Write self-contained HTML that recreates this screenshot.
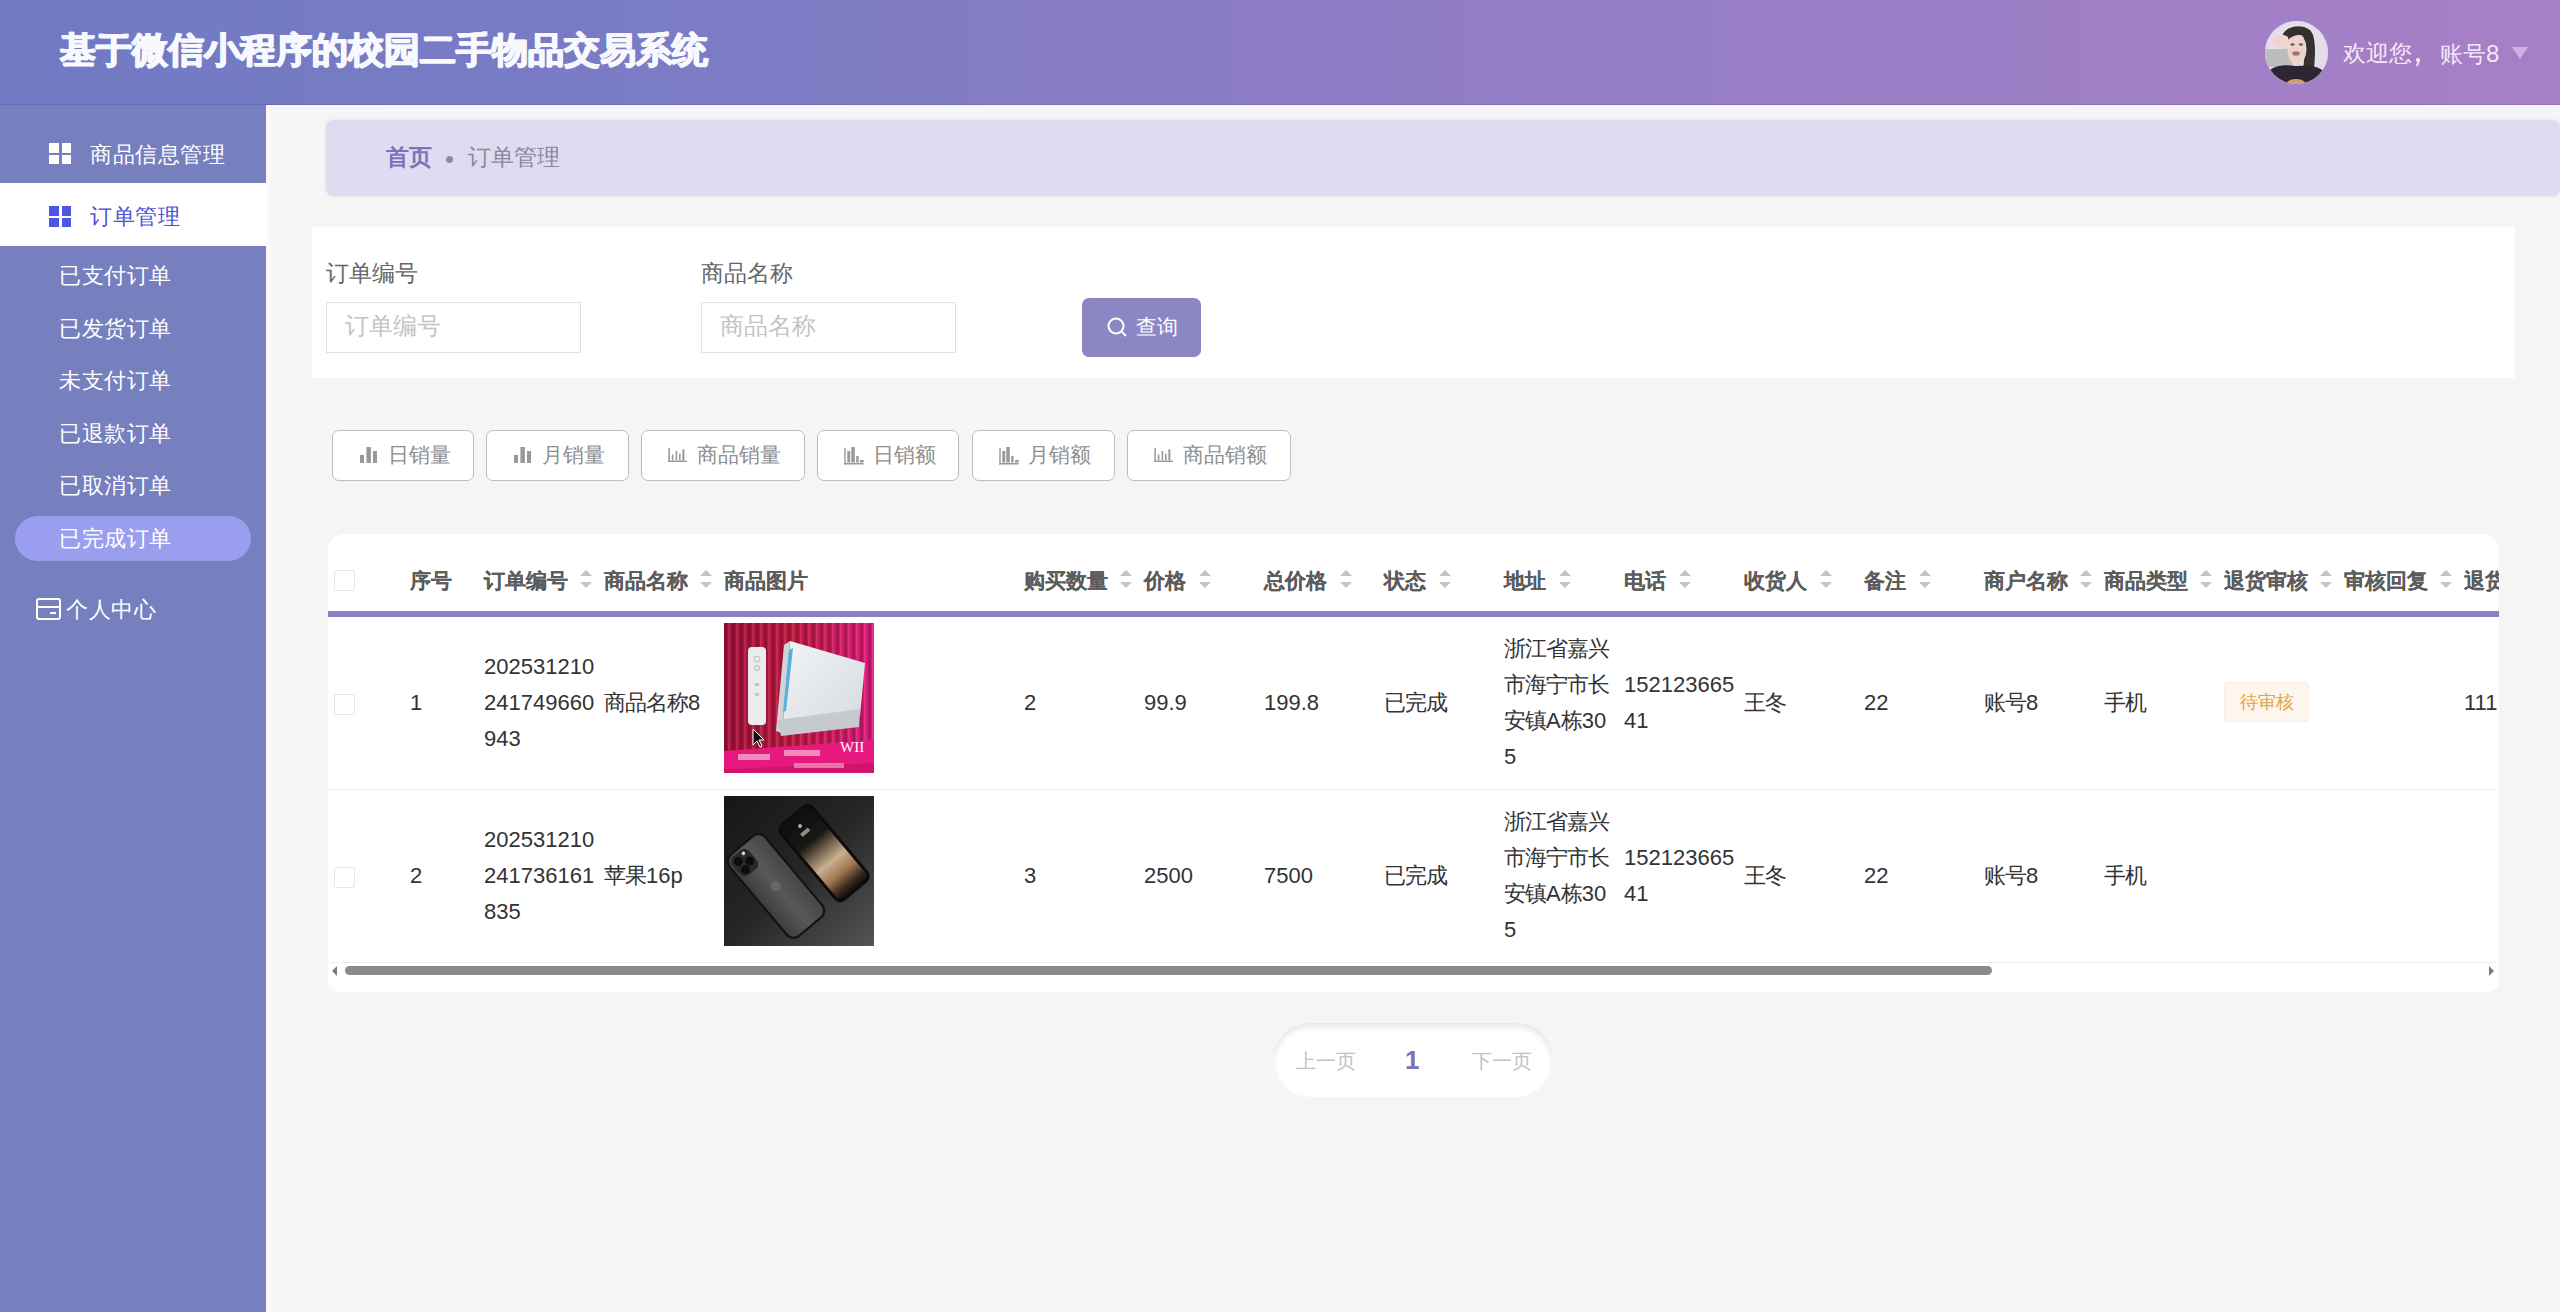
<!DOCTYPE html>
<html><head><meta charset="utf-8">
<style>
*{box-sizing:border-box;margin:0;padding:0}
html,body{width:2560px;height:1312px;overflow:hidden}
body{position:relative;background:#f5f5f5;font-family:"Liberation Sans",sans-serif;color:#333}
.abs{position:absolute;white-space:nowrap}
#hdr{position:absolute;z-index:2;left:0;top:0;width:2560px;height:105px;box-shadow:inset 0 -1px 0 rgba(0,0,0,.10);background:linear-gradient(90deg,#6f7ac3 0%,#7a7cc4 25%,#8a7cc4 47%,#9a7fc6 72%,#a07fc6 85%,#a87fc6 100%)}
#title{left:60px;top:26px;font-size:36px;line-height:48px;font-weight:bold;color:#f8f8ff;letter-spacing:0;text-shadow:0.7px 0 0 #f8f8ff,-0.7px 0 0 #f8f8ff,0 0.5px 0 #f8f8ff}
#side{position:absolute;left:0;top:104px;width:266px;height:1208px;background:#7680be}
.mi{color:#fff;font-size:22px;line-height:30px;letter-spacing:0.6px}
.grid{position:absolute;width:22px;height:21px}
.grid i{position:absolute;width:9.5px;height:9.5px;background:#fff}
#bc{position:absolute;left:326px;top:120px;width:2234px;height:76px;background:#dfdcf1;border-radius:8px;box-shadow:0 0 3px rgba(120,110,160,.18)}
#sp{position:absolute;left:312px;top:227px;width:2203px;height:151px;background:#fff}
.lbl{font-size:22.5px;line-height:30px;color:#666}
.inp{position:absolute;width:255px;height:51px;border:1px solid #e2e2e2;background:#fff}
.ph{font-size:23.5px;line-height:30px;color:#c4c4c4}
#qbtn{position:absolute;left:1082px;top:298px;width:119px;height:59px;background:#8b86c4;border-radius:7px}
.sb{position:absolute;top:430px;height:51px;border:1px solid #bdbdbd;border-radius:7px;background:#fff}
.sbt{font-size:20.5px;line-height:26px;color:#8e8e8e}
#card{position:absolute;left:328px;top:534px;width:2171px;height:458px;background:#fff;border-radius:16px 16px 10px 10px;overflow:hidden}
.th{font-size:20.5px;line-height:26px;font-weight:bold;color:#5c5c5c;text-shadow:0.4px 0 0 #5c5c5c}
.td{font-size:22px;line-height:36px;color:#333}
.c{letter-spacing:-1px}
.sort{position:absolute;width:12px;height:18px}
.sort:before{content:"";position:absolute;left:0;top:0;border-left:6px solid transparent;border-right:6px solid transparent;border-bottom:6px solid #c4c4c4}
.sort:after{content:"";position:absolute;left:0;top:12px;border-left:6px solid transparent;border-right:6px solid transparent;border-top:6px solid #c4c4c4}
.cb{position:absolute;width:21px;height:21px;border:1px solid #e6e6e6;border-radius:2px;background:#fff}
</style></head><body>

<div id="hdr">
  <div id="title" class="abs">基于微信小程序的校园二手物品交易系统</div>

  <div class="abs" style="left:2265px;top:21px;width:63px;height:63px;border-radius:50%;overflow:hidden;background:#d9d6dc">
    <svg width="63" height="63" viewBox="0 0 63 63">
      <defs><radialGradient id="avbg" cx="0.5" cy="0.45" r="0.6"><stop offset="0" stop-color="#ecebef"/><stop offset="1" stop-color="#e0d6ea"/></radialGradient>
      <filter id="avb" x="-10%" y="-10%" width="120%" height="120%"><feGaussianBlur stdDeviation="0.7"/></filter></defs>
      <rect width="63" height="63" fill="url(#avbg)"/>
      <g filter="url(#avb)">
      <path d="M17 17 C18 3 44 1 48 14 C51 24 50 36 49 48 L38 48 C40 36 40 22 36 16 C30 12 24 14 22 22Z" fill="#35302f"/>
      <path d="M0 28 L26 28 L28 46 L0 46Z" fill="#bdbdbf"/>
      <ellipse cx="32" cy="28" rx="9.5" ry="16" fill="#ecd3cc"/>
      <path d="M21 15 C26 9 36 9 40 15 C34 13 27 14 22 20Z" fill="#35302f"/>
      <path d="M6 20 C9 13 18 12 23 16 L25 28 C16 28 9 26 6 20Z" fill="#eed5cd"/>
      <ellipse cx="27.5" cy="23.5" rx="2" ry="1.2" fill="#6a5550"/>
      <ellipse cx="36" cy="23.5" rx="2" ry="1.2" fill="#6a5550"/>
      <ellipse cx="31" cy="32.5" rx="3.8" ry="2.2" fill="#a47276"/>
      <path d="M4 50 C9 45 18 43 31 45 C44 44 54 45 58 50 L63 63 L0 63 Z" fill="#2c2830"/>
      <ellipse cx="31" cy="62" rx="9" ry="4" fill="#c9a070"/>
      </g>
    </svg>
  </div>
  <div class="abs" style="left:2343px;top:39px;font-size:22.5px;line-height:30px;color:#f6e8f8">欢迎您</div>
  <div class="abs" style="left:2416px;top:58px;width:4px;height:4px;border-radius:50%;background:#f6e8f8"></div>
  <div class="abs" style="left:2417px;top:60px;width:2px;height:6px;transform:skewX(-20deg);background:#f6e8f8"></div>
  <div class="abs" style="left:2440px;top:39px;font-size:22.5px;line-height:30px;color:#f6e8f8">账号<span style="font-size:24px">8</span></div>
  <div class="abs" style="left:2512px;top:47px;width:0;height:0;border-left:8px solid transparent;border-right:8px solid transparent;border-top:12px solid #d0b3e6"></div>
</div>

<div id="side">
  <div class="grid" style="left:49px;top:39px"><i style="left:0;top:0"></i><i style="left:12.5px;top:0"></i><i style="left:0;top:11.5px"></i><i style="left:12.5px;top:11.5px"></i></div>
  <div class="abs mi" style="left:90px;top:36px">商品信息管理</div>
  <div style="position:absolute;left:0;top:79px;width:266px;height:63px;background:#fff"></div>
  <div class="grid" style="left:49px;top:102px"><i style="left:0;top:0;background:#4d55e6"></i><i style="left:12.5px;top:0;background:#4d55e6"></i><i style="left:0;top:11.5px;background:#4d55e6"></i><i style="left:12.5px;top:11.5px;background:#4d55e6"></i></div>
  <div class="abs mi" style="left:90px;top:98px;color:#4c50d8">订单管理</div>
  <div class="abs mi" style="left:59px;top:157px">已支付订单</div>
  <div class="abs mi" style="left:59px;top:210px">已发货订单</div>
  <div class="abs mi" style="left:59px;top:262px">未支付订单</div>
  <div class="abs mi" style="left:59px;top:315px">已退款订单</div>
  <div class="abs mi" style="left:59px;top:367px">已取消订单</div>
  <div style="position:absolute;left:15px;top:412px;width:236px;height:45px;border-radius:23px;background:#9a9eee"></div>
  <div class="abs mi" style="left:59px;top:420px">已完成订单</div>
  <div class="abs" style="left:36px;top:494px;width:25px;height:22px;border:2px solid #fff;border-radius:3px"><i style="position:absolute;left:0;right:0;top:6px;height:2px;background:#fff"></i><i style="position:absolute;right:3px;top:12px;width:6px;height:2px;background:#fff"></i></div>
  <div class="abs mi" style="left:66px;top:491px">个人中心</div>
</div>

<div class="abs" style="left:266px;top:105px;width:4px;height:1207px;background:#fbf9fb"></div>
<div class="abs" style="left:270px;top:105px;width:2290px;height:15px;background:linear-gradient(#f7f5fa,#f4f4f8)"></div>
<div id="bc">
  <div class="abs" style="left:60px;top:23px;font-size:22.5px;line-height:30px;font-weight:bold;color:#7b74b8">首页</div>
  <div class="abs" style="left:120px;top:36px;width:7px;height:7px;border-radius:50%;background:#8c8a9c"></div>
  <div class="abs" style="left:142px;top:23px;font-size:22.5px;line-height:30px;color:#8b899c">订单管理</div>
</div>
<div id="sp">
  <div class="abs lbl" style="left:14px;top:32px">订单编号</div>
  <div class="inp" style="left:14px;top:75px"></div>
  <div class="abs ph" style="left:33px;top:84px">订单编号</div>
  <div class="abs lbl" style="left:389px;top:32px">商品名称</div>
  <div class="inp" style="left:389px;top:75px"></div>
  <div class="abs ph" style="left:408px;top:84px">商品名称</div>
</div>
<div id="qbtn">
  <svg class="abs" style="left:25px;top:19px" width="21" height="20" viewBox="0 0 21 20"><circle cx="9" cy="9" r="7.5" fill="none" stroke="#fff" stroke-width="2"/><path d="M14.5 14.5 L19 19" stroke="#fff" stroke-width="2"/></svg>
  <div class="abs" style="left:54px;top:15px;font-size:21px;line-height:28px;color:#fff">查询</div>
</div>
<div class="sb" style="left:332px;width:142px"><svg class="abs" style="left:27px;top:16px" width="18" height="16" viewBox="0 0 18 16"><rect x="0" y="8" width="4" height="8" fill="#999"/><rect x="6.4" y="0" width="4.5" height="16" fill="#999"/><rect x="13" y="4" width="4" height="12" fill="#999"/></svg><div class="abs sbt" style="left:55px;top:11px">日销量</div></div>
<div class="sb" style="left:486px;width:143px"><svg class="abs" style="left:27px;top:16px" width="18" height="16" viewBox="0 0 18 16"><rect x="0" y="8" width="4" height="8" fill="#999"/><rect x="6.4" y="0" width="4.5" height="16" fill="#999"/><rect x="13" y="4" width="4" height="12" fill="#999"/></svg><div class="abs sbt" style="left:55px;top:11px">月销量</div></div>
<div class="sb" style="left:641px;width:164px"><svg class="abs" style="left:26px;top:17px" width="20" height="15" viewBox="0 0 20 15"><rect x="0.4" y="0" width="1.5" height="14" fill="#999"/><rect x="0" y="12.6" width="19" height="1.4" fill="#999"/><rect x="3.8" y="6.4" width="1.6" height="6.2" fill="#999"/><rect x="7.6" y="3" width="1.6" height="9.6" fill="#999"/><rect x="11" y="5.7" width="1.6" height="6.9" fill="#999"/><rect x="14.4" y="1.4" width="2" height="11.2" fill="#999"/></svg><div class="abs sbt" style="left:55px;top:11px">商品销量</div></div>
<div class="sb" style="left:817px;width:142px"><svg class="abs" style="left:26px;top:16px" width="20" height="18" viewBox="0 0 20 18"><rect x="0.3" y="1" width="1.4" height="16.7" fill="#999"/><rect x="0" y="16" width="19.5" height="1.5" fill="#999"/><rect x="3.3" y="4" width="2.9" height="11.5" fill="#999"/><rect x="7.3" y="0" width="3.5" height="15.5" fill="#999"/><rect x="12.2" y="9" width="2.4" height="6.5" fill="#999"/><rect x="16" y="13" width="3.7" height="2.5" fill="#999"/></svg><div class="abs sbt" style="left:55px;top:11px">日销额</div></div>
<div class="sb" style="left:972px;width:143px"><svg class="abs" style="left:26px;top:16px" width="20" height="18" viewBox="0 0 20 18"><rect x="0.3" y="1" width="1.4" height="16.7" fill="#999"/><rect x="0" y="16" width="19.5" height="1.5" fill="#999"/><rect x="3.3" y="4" width="2.9" height="11.5" fill="#999"/><rect x="7.3" y="0" width="3.5" height="15.5" fill="#999"/><rect x="12.2" y="9" width="2.4" height="6.5" fill="#999"/><rect x="16" y="13" width="3.7" height="2.5" fill="#999"/></svg><div class="abs sbt" style="left:55px;top:11px">月销额</div></div>
<div class="sb" style="left:1127px;width:164px"><svg class="abs" style="left:26px;top:17px" width="20" height="15" viewBox="0 0 20 15"><rect x="0.4" y="0" width="1.5" height="14" fill="#999"/><rect x="0" y="12.6" width="19" height="1.4" fill="#999"/><rect x="3.8" y="6.4" width="1.6" height="6.2" fill="#999"/><rect x="7.6" y="3" width="1.6" height="9.6" fill="#999"/><rect x="11" y="5.7" width="1.6" height="6.9" fill="#999"/><rect x="14.4" y="1.4" width="2" height="11.2" fill="#999"/></svg><div class="abs sbt" style="left:55px;top:11px">商品销额</div></div>
<div id="card">
<div class="cb" style="left:6px;top:36px"></div>
<div class="abs th" style="left:82px;top:34px">序号</div>
<div class="abs th" style="left:156px;top:34px">订单编号</div>
<div class="sort" style="left:252px;top:36px"></div>
<div class="abs th" style="left:276px;top:34px">商品名称</div>
<div class="sort" style="left:372px;top:36px"></div>
<div class="abs th" style="left:396px;top:34px">商品图片</div>
<div class="abs th" style="left:696px;top:34px">购买数量</div>
<div class="sort" style="left:792px;top:36px"></div>
<div class="abs th" style="left:816px;top:34px">价格</div>
<div class="sort" style="left:871px;top:36px"></div>
<div class="abs th" style="left:936px;top:34px">总价格</div>
<div class="sort" style="left:1012px;top:36px"></div>
<div class="abs th" style="left:1056px;top:34px">状态</div>
<div class="sort" style="left:1111px;top:36px"></div>
<div class="abs th" style="left:1176px;top:34px">地址</div>
<div class="sort" style="left:1231px;top:36px"></div>
<div class="abs th" style="left:1296px;top:34px">电话</div>
<div class="sort" style="left:1351px;top:36px"></div>
<div class="abs th" style="left:1416px;top:34px">收货人</div>
<div class="sort" style="left:1492px;top:36px"></div>
<div class="abs th" style="left:1536px;top:34px">备注</div>
<div class="sort" style="left:1591px;top:36px"></div>
<div class="abs th" style="left:1656px;top:34px">商户名称</div>
<div class="sort" style="left:1752px;top:36px"></div>
<div class="abs th" style="left:1776px;top:34px">商品类型</div>
<div class="sort" style="left:1872px;top:36px"></div>
<div class="abs th" style="left:1896px;top:34px">退货审核</div>
<div class="sort" style="left:1992px;top:36px"></div>
<div class="abs th" style="left:2016px;top:34px">审核回复</div>
<div class="sort" style="left:2112px;top:36px"></div>
<div class="abs th" style="left:2136px;top:34px">退货原因</div>
<div class="sort" style="left:2232px;top:36px"></div>
<div class="abs" style="left:0;top:77px;width:2171px;height:6px;background:#8a80c3"></div>
<div class="cb" style="left:6px;top:160px"></div>
<div class="abs td" style="left:82px;top:151px">1</div>
<div class="abs td" style="left:156px;top:115px">202531210<br>241749660<br>943</div>
<div class="abs td" style="left:276px;top:151px"><span class="c">商品名称</span>8</div>
<div class="abs" style="left:396px;top:89px;width:150px;height:150px"><svg width="150" height="150" viewBox="0 0 150 150">
<defs>
<linearGradient id="cur" x1="0" y1="0" x2="1" y2="0">
<stop offset="0" stop-color="#a50f3a"/><stop offset="0.45" stop-color="#c0163f"/><stop offset="1" stop-color="#dc1a7a"/>
</linearGradient>
<pattern id="str" width="8" height="150" patternUnits="userSpaceOnUse">
<rect x="0" width="3" height="150" fill="#000" opacity="0.18"/><rect x="4" width="2" height="150" fill="#fff" opacity="0.10"/>
</pattern>
<linearGradient id="body" x1="0" y1="0" x2="1" y2="1">
<stop offset="0" stop-color="#f2f4f6"/><stop offset="1" stop-color="#d6dade"/>
</linearGradient>
</defs>
<rect width="150" height="150" fill="url(#cur)"/>
<rect width="150" height="130" fill="url(#str)"/>
<path d="M0 128 L150 117 L150 150 L0 150Z" fill="#e8197e"/>
<path d="M0 146 L150 140 L150 150 L0 150Z" fill="#d0146a"/>
<rect x="24" y="24" width="18" height="78" rx="4" fill="#e9ebee"/>
<circle cx="33" cy="36" r="3" fill="none" stroke="#b8bcc0" stroke-width="1"/>
<circle cx="33" cy="45" r="2.5" fill="none" stroke="#b8bcc0" stroke-width="1"/>
<rect x="31" y="60" width="4" height="3" fill="#c0c4c8"/><rect x="31" y="70" width="4" height="3" fill="#c0c4c8"/>
<path d="M66 18 L141 40 L136 93 L58 110 Z" fill="url(#body)"/>
<path d="M60 22 L66 18 L58 110 L52 108 Z" fill="#d0d4d8"/>
<path d="M65 27 L69 25 L62 88 L59 89Z" fill="#58b0dc"/>
<path d="M53 97 L136 86 L135 104 L57 113 Z" fill="#c6cacf"/>
<text x="116" y="129" font-family="Liberation Serif,serif" font-size="15" fill="#fff">WII</text>
<rect x="14" y="131" width="32" height="6" fill="#f6b0d0" opacity="0.75"/>
<rect x="60" y="127" width="36" height="6" fill="#f6b0d0" opacity="0.75"/>
<rect x="70" y="140" width="50" height="5" fill="#f6b0d0" opacity="0.6"/>
<path d="M29 106 L29 122 L33 118 L36 124 L38 123 L35 117 L40 117Z" fill="#111" stroke="#fff" stroke-width="1"/>
</svg></div>
<div class="abs td" style="left:696px;top:151px">2</div>
<div class="abs td" style="left:816px;top:151px">99.9</div>
<div class="abs td" style="left:936px;top:151px">199.8</div>
<div class="abs td" style="left:1056px;top:151px"><span class="c">已完成</span></div>
<div class="abs td" style="left:1176px;top:97px"><span class="c">浙江省嘉兴</span><br><span class="c">市海宁市长</span><br><span class="c">安镇</span>A<span class="c">栋</span>30<br>5</div>
<div class="abs td" style="left:1296px;top:133px">152123665<br>41</div>
<div class="abs td" style="left:1416px;top:151px"><span class="c">王冬</span></div>
<div class="abs td" style="left:1536px;top:151px">22</div>
<div class="abs td" style="left:1656px;top:151px"><span class="c">账号</span>8</div>
<div class="abs td" style="left:1776px;top:151px"><span class="c">手机</span></div>
<div class="abs" style="left:1896px;top:148px;width:85px;height:40px;background:#fdf6ec;border:1px solid #faf0e2;border-radius:4px"></div>
<div class="abs" style="left:1912px;top:155px;font-size:18px;line-height:26px;color:#e6a23c">待审核</div>
<div class="abs td" style="left:2136px;top:151px">111</div>
<div class="abs" style="left:0;top:255px;width:2171px;height:1px;background:#ebeef5"></div>
<div class="cb" style="left:6px;top:333px"></div>
<div class="abs td" style="left:82px;top:324px">2</div>
<div class="abs td" style="left:156px;top:288px">202531210<br>241736161<br>835</div>
<div class="abs td" style="left:276px;top:324px"><span class="c">苹果</span>16p</div>
<div class="abs" style="left:396px;top:262px;width:150px;height:150px"><svg width="150" height="150" viewBox="0 0 150 150">
<defs>
<linearGradient id="pbg" x1="0" y1="0" x2="1" y2="1">
<stop offset="0" stop-color="#161616"/><stop offset="0.5" stop-color="#262626"/><stop offset="1" stop-color="#555"/>
</linearGradient>
<linearGradient id="scr" x1="0" y1="0" x2="0" y2="1">
<stop offset="0" stop-color="#0e0e0e"/><stop offset="0.32" stop-color="#1a1816"/><stop offset="0.45" stop-color="#6a5a48"/><stop offset="0.62" stop-color="#c8b090"/><stop offset="0.78" stop-color="#a07850"/><stop offset="0.92" stop-color="#3a2a20"/><stop offset="1" stop-color="#111"/>
</linearGradient>
<linearGradient id="back" x1="0" y1="0" x2="1" y2="0">
<stop offset="0" stop-color="#3e3e3e"/><stop offset="0.5" stop-color="#585858"/><stop offset="1" stop-color="#474747"/>
</linearGradient>
</defs>
<rect width="150" height="150" fill="url(#pbg)"/>
<g transform="translate(52 90) rotate(-40)">
<rect x="-24" y="-54" width="48" height="108" rx="9" fill="#121212"/>
<rect x="-22" y="-52" width="44" height="104" rx="8" fill="url(#back)"/>
<rect x="-20" y="-50" width="22" height="24" rx="6" fill="#2a2a2a"/>
<circle cx="-13" cy="-43" r="4.5" fill="#0c0c0c"/><circle cx="-4" cy="-36" r="4.5" fill="#0c0c0c"/><circle cx="-13" cy="-32" r="4.5" fill="#0c0c0c"/>
<circle cx="-4" cy="-46" r="1.8" fill="#ddd"/>
<circle cx="0" cy="0" r="5" fill="#666"/>
</g>
<g transform="translate(100 57) rotate(-40)">
<rect x="-22" y="-50" width="44" height="100" rx="8" fill="#0c0c0c"/>
<rect x="-19" y="-47" width="38" height="94" rx="6" fill="url(#scr)"/>
<rect x="-6" y="-30" width="10" height="4" fill="#ddd" opacity="0.6"/>
<circle cx="-1" cy="-36" r="2" fill="#eee" opacity="0.7"/>
</g>
</svg></div>
<div class="abs td" style="left:696px;top:324px">3</div>
<div class="abs td" style="left:816px;top:324px">2500</div>
<div class="abs td" style="left:936px;top:324px">7500</div>
<div class="abs td" style="left:1056px;top:324px"><span class="c">已完成</span></div>
<div class="abs td" style="left:1176px;top:270px"><span class="c">浙江省嘉兴</span><br><span class="c">市海宁市长</span><br><span class="c">安镇</span>A<span class="c">栋</span>30<br>5</div>
<div class="abs td" style="left:1296px;top:306px">152123665<br>41</div>
<div class="abs td" style="left:1416px;top:324px"><span class="c">王冬</span></div>
<div class="abs td" style="left:1536px;top:324px">22</div>
<div class="abs td" style="left:1656px;top:324px"><span class="c">账号</span>8</div>
<div class="abs td" style="left:1776px;top:324px"><span class="c">手机</span></div>
<div class="abs" style="left:0;top:428px;width:2171px;height:1px;background:#ebeef5"></div>
<div class="abs" style="left:17px;top:432px;width:1647px;height:9px;border-radius:5px;background:#8a8a8a"></div>
<div class="abs" style="left:4px;top:432px;width:0;height:0;border-top:5px solid transparent;border-bottom:5px solid transparent;border-right:5px solid #7a7a7a"></div>
<div class="abs" style="left:2161px;top:432px;width:0;height:0;border-top:5px solid transparent;border-bottom:5px solid transparent;border-left:5px solid #7a7a7a"></div>
</div>

<div class="abs" style="left:1273px;top:1023px;width:280px;height:74px;border-radius:37px;background:#fff;box-shadow:inset 0 4px 6px rgba(0,0,0,.10)"></div>
<div class="abs" style="left:1296px;top:1047px;font-family:'Liberation Serif',serif;font-size:20px;line-height:28px;color:#c2c2c2">上一页</div>
<div class="abs" style="left:1405px;top:1043px;font-size:26px;line-height:34px;font-weight:bold;color:#7c70b8">1</div>
<div class="abs" style="left:1472px;top:1047px;font-family:'Liberation Serif',serif;font-size:20px;line-height:28px;color:#c2c2c2">下一页</div>
</body></html>
